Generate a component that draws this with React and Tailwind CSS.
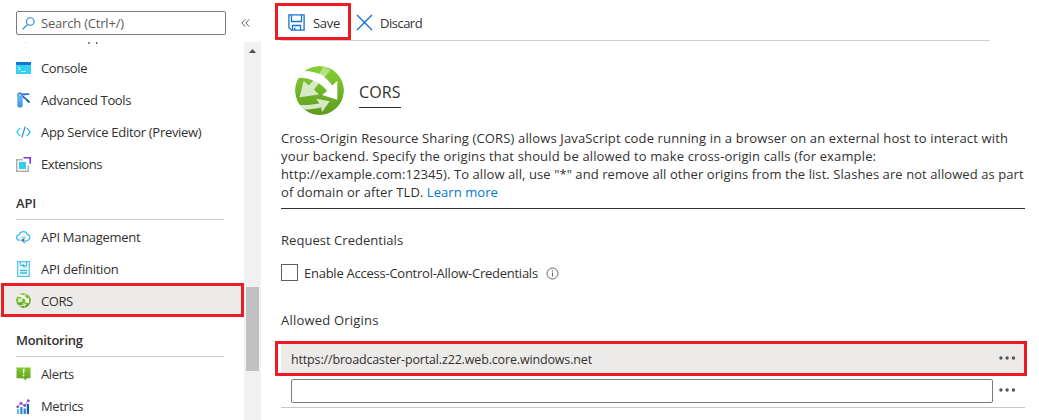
const ConsoleIcon = () => (
  <svg width="15" height="12" viewBox="0 0 15 12" className="block">
    <rect width="15" height="12" rx=".5" fill="#32d0f3" />
    <path d="M0 0h15v3H0z" fill="#0f78d3" />
    <path d="M2 4.8l2.2 1.9L2 8.6" fill="none" stroke="#e6fbff" strokeWidth="1" />
    <path d="M5 9.5h4.5" stroke="#e6fbff" />
  </svg>
);
const ToolsIcon = () => (
  <svg width="15" height="16" viewBox="0 0 15 16" className="block">
    <defs>
      <linearGradient id="tool" x1="0" x2="0" y1="0" y2="1">
        <stop offset="0" stopColor="#2f7fd0" /><stop offset=".35" stopColor="#6db4f2" /><stop offset="1" stopColor="#3a8ee6" />
      </linearGradient>
    </defs>
    <path d="M6 1.600l7.300-.3v1.500L6 3.400z" fill="#1b72c9" />
    <path d="M6.500 3l7.500 6.500-.8 1.800-3-2.400-.2-1L6.500 5.600z" fill="#1267c2" />
    <rect x="1.300" y=".500" width="5.400" height="15" rx="2" fill="url(#tool)" />
    <circle cx="3.800" cy="3" r=".9" fill="#cfe7ff" />
  </svg>
);
const CodeIcon = () => (
  <svg width="15" height="12" viewBox="0 0 15 12" className="block" fill="none" strokeWidth="1.3">
    <path d="M4.200 1.800L.9 6l3.300 4.200" stroke="#40cbee" />
    <path d="M10.800 1.800L14.100 6l-3.300 4.200" stroke="#40b4ee" />
    <path d="M9.200.6L5.900 11.400" stroke="#3b8be0" />
  </svg>
);
const ExtensionsIcon = () => (
  <svg width="15" height="15" viewBox="0 0 15 15" className="block">
    <path d="M7 2.700H.8v11.500h11.500V8.500" fill="none" stroke="#aeaeae" strokeWidth="1.500" />
    <rect x="3" y="5" width="7" height="7" fill="#35cdeb" />
    <path d="M7.500.8h6.700v6" fill="none" stroke="#7636d9" strokeWidth="1.600" />
  </svg>
);
const CloudIcon = () => (
  <svg width="15" height="14" viewBox="0 0 15 14" className="block" fill="none">
    <path d="M4.300 10.200H3.400A2.700 2.700 0 0 1 3.100 4.800 4.300 4.300 0 0 1 11.300 4.600a2.900 2.900 0 0 1 .2 5.700L7.500 13" stroke="#3dbde9" strokeWidth="1.300" />
    <path d="M4.500 8.200c1-1.300 3-1.600 4.200-.5M9 6v2.400H6.600" stroke="#64cbea" />
    <circle cx="7" cy="10.200" r="1.500" fill="#7359bb" />
  </svg>
);
const DefinitionIcon = () => (
  <svg width="13" height="16" viewBox="0 0 13 16" className="ml-px block" fill="none">
    <path d="M.7.700h11.600v14.600H.7z" fill="#effcff" stroke="#45cde8" strokeWidth="1.200" />
    <path d="M3.300 1v3.400h5M9.500 1v3.800M6.300 3v2.800h3.200" stroke="#27b8dc" />
    <path d="M3 9.500h7M3 12h7" stroke="#38bddb" strokeWidth="1.300" />
  </svg>
);
const CorsIcon = ({ size, id }) => (
  <svg width={size} height={size} viewBox="0 0 48 48" className="block">
    <defs>
      <linearGradient id={id} x1="0" x2="0" y1="0" y2="1">
        <stop offset="0" stopColor="#84d132" /><stop offset="1" stopColor="#5f9a20" />
      </linearGradient>
      <clipPath id={id + "-clip"}><circle cx="24" cy="24" r="24" /></clipPath>
    </defs>
    <g clipPath={`url(#${id}-clip)`}>
      <circle cx="24" cy="24" r="24" fill={`url(#${id})`} />
      <path d="M29 1.500l4.500 3.500L18.500 23l5 5L4.500 30.500 8.500 14.500l5 4.500z" fill="#d7eac6" />
      <path d="M28.500 0l6 4-4.500 6-6-3z" fill="#b5e184" />
      <path d="M2 38c8 .7 16 0 22-1.500l-3.500-4.500 13.500 2.500-7.500 10.500-1-4.500C18 42.500 11 43 5 42z" fill="#d7eac6" />
      <path d="M2 11.500L8 5c12-.5 21.500 4 28.500 14L41.500 14.500V33L26.500 28.500l5-4C25 15.500 14 11 2 11.500z" fill="#fff" />
    </g>
  </svg>
);
const AlertsIcon = () => (
  <svg width="15" height="14" viewBox="0 0 15 14" className="block">
    <defs>
      <linearGradient id="alert" x1="0" x2="0" y1="0" y2="1">
        <stop offset="0" stopColor="#80ca2b" /><stop offset="1" stopColor="#609e20" />
      </linearGradient>
    </defs>
    <path d="M.5.500h14v10.700h-4L10 13.500 7.500 11.200H.5z" fill="url(#alert)" />
    <path d="M6.800 1.800h1.700l-.3 5H7z" fill="#fff" />
    <circle cx="7.600" cy="8.600" r=".9" fill="#fff" />
  </svg>
);
const MetricsIcon = () => (
  <svg width="14" height="15" viewBox="0 0 14 15" className="block">
    <path d="M1 10h2.200v5H1z" fill="#6cb9f2" />
    <path d="M4.300 8h2.200v7H4.300z" fill="#2387d8" />
    <path d="M7.600 9.500h2.200V15H7.600z" fill="#2380ca" />
    <path d="M10.800 5H13v10h-2.200z" fill="#115ea3" />
    <path d="M1.700 7.800l3-3.500 4 2.300 3.600-5" fill="none" stroke="#a67af4" strokeWidth="1" />
    <g fill="#8d50e6"><circle cx="1.700" cy="7.800" r="1.400" /><circle cx="5" cy="4.200" r="1.500" /><circle cx="8.700" cy="6.600" r="1.500" /><circle cx="12.300" cy="1.700" r="1.500" /></g>
  </svg>
);

const NavItem = ({ icon, label, spacing }) => (
  <div className="flex h-8 items-center pl-4">
    <div className="flex w-[25px] shrink-0">{icon}</div>
    <span className={"whitespace-nowrap " + spacing}>{label}</span>
  </div>
);
const NavHeading = ({ label, spacing }) => (
  <div className="ml-4 w-52 border-b border-[#c8c8c8]">
    <div className={"flex h-8 items-center font-semibold " + spacing}>{label}</div>
  </div>
);
const Dots = () => (
  <svg width="16" height="4" viewBox="0 0 16 4" className="block shrink-0" fill="#555">
    <circle cx="1.900" cy="2" r="1.700" /><circle cx="8.100" cy="2" r="1.700" /><circle cx="14.400" cy="2" r="1.700" />
  </svg>
);

function Sidebar() {
  return (
    <aside className="flex h-[420px] w-[261px] shrink-0 flex-col">
      <div className="flex h-[42px] shrink-0 items-start pt-[11px] pl-4">
        <div className="flex h-6 w-[210px] items-center rounded-[2px] border border-[#7c7a78] pl-[5px]">
          <svg width="13" height="13" viewBox="0 0 13 13" fill="none" stroke="#1981d8" strokeWidth="1.100" className="shrink-0">
            <circle cx="8.300" cy="4.500" r="3.800" /><path d="M5.600 7.300L.6 12.300" />
          </svg>
          <span className="ml-1.5 whitespace-nowrap tracking-[-0.2px] text-[#5c5a58]">Search (Ctrl+/)</span>
        </div>
        <svg width="9" height="8" viewBox="0 0 9 8" fill="none" stroke="#555" className="mt-2 ml-[15px]">
          <path d="M4.200.5L.8 4l3.400 3.500M8.200.5L4.800 4l3.400 3.500" />
        </svg>
      </div>
      <div className="flex h-[378px]">
        <div className="flex h-[378px] w-[244px] flex-col overflow-hidden">
          <nav className="-mt-[22px] flex flex-col">
            <NavItem icon={<svg width="15" height="15" viewBox="0 0 15 15"><path d="M8 11l3-1v3.500H8z" fill="#e9e5bd" /></svg>} label="Clone App" spacing="tracking-[0px]" />
            <NavItem icon={<ConsoleIcon />} label="Console" spacing="tracking-[-0.35px]" />
            <NavItem icon={<ToolsIcon />} label="Advanced Tools" spacing="tracking-[-0.35px]" />
            <NavItem icon={<CodeIcon />} label="App Service Editor (Preview)" spacing="tracking-[-0.3px]" />
            <NavItem icon={<ExtensionsIcon />} label="Extensions" spacing="tracking-[-0.45px]" />
            <div className="h-[7px]" />
            <NavHeading label="API" spacing="tracking-[-0.2px]" />
            <div className="h-px" />
            <NavItem icon={<CloudIcon />} label="API Management" spacing="tracking-[-0.3px]" />
            <NavItem icon={<DefinitionIcon />} label="API definition" spacing="tracking-[-0.25px]" />
            <div className="-mt-[2px] ml-px flex h-[34px] items-center border-[3px] border-[#ed1c24] bg-[#edebe9] pl-3">
              <div className="w-[25px]"><CorsIcon size={15} id="nav-cors" /></div>
              <span className="pt-[2px] tracking-[-0.45px]">CORS</span>
            </div>
            <div className="h-[7px]" />
            <NavHeading label="Monitoring" spacing="tracking-[-0.3px]" />
            <div className="h-px" />
            <NavItem icon={<AlertsIcon />} label="Alerts" spacing="tracking-[-0.35px]" />
            <NavItem icon={<MetricsIcon />} label="Metrics" spacing="tracking-[-0.35px]" />
          </nav>
        </div>
        <div className="flex w-[17px] flex-col bg-[#f1f1f1] px-[2px]">
          <svg width="13" height="17" viewBox="0 0 13 17" className="block"><path d="M3 11h7L6.500 7z" fill="#505050" /></svg>
          <div className="mt-[228px] h-[84px] bg-[#c1c1c1]" />
        </div>
      </div>
    </aside>
  );
}

function Main() {
  return (
    <main className="flex w-[778px] flex-col">
      <div className="flex h-[41px] shrink-0 items-start pt-[3px] pl-[14px]">
        <button className="relative z-10 flex h-[37px] w-[76px] items-center border-[3px] border-[#ed1c24] pt-[2px] pl-[10px]">
          <svg width="17" height="17" viewBox="0 0 17 17" fill="none" stroke="#1374ce" strokeWidth="1.300" className="-mt-px shrink-0">
            <path d="M.9.900h15.200v15.200H3.500L.9 13.500z" /><path d="M3.500 1v6.500h10V1M4.500 16v-4.500h8V16M6.800 16v-2.500" />
          </svg>
          <span className="ml-2 tracking-[-0.3px]">Save</span>
        </button>
        <button className="flex h-[37px] items-center pt-[2px] pl-[5px]">
          <svg width="17" height="17" viewBox="0 0 17 17" fill="none" stroke="#1374ce" strokeWidth="1.400"><path d="M1 1l15 15M16 1L1 16" /></svg>
          <span className="ml-[7px] tracking-[-0.5px]">Discard</span>
        </button>
      </div>
      <div className="-mt-px ml-5 h-px w-[709px] bg-[#d2d0ce]" />
      <div className="ml-[34px] mt-[25px] flex h-12 w-[200px]">
        <div className="size-12 shrink-0"><CorsIcon size={49} id="main-cors" /></div>
        <div className="mt-[13px] ml-4 flex h-[29px] items-center border-b border-[#323130] pb-[2px] text-[16px] tracking-[0.1px]">CORS</div>
      </div>
      <p className="mt-[15px] ml-5 h-20 w-[744px] border-b border-[#323130] text-[13px] leading-[18px] whitespace-nowrap">
        <span className="tracking-[0.145px]">Cross-Origin Resource Sharing (CORS) allows JavaScript code running in a browser on an external host to interact with</span><br />
        <span className="tracking-[0.15px]">your backend. Specify the origins that should be allowed to make cross-origin calls (for example:</span><br />
        <span className="tracking-[0.08px]">http://example.com:12345). To allow all, use "*" and remove all other origins from the list. Slashes are not allowed as part</span><br />
        <span className="tracking-[0.07px]">of domain or after TLD. <a className="text-[#0078d4]">Learn more</a></span>
      </p>
      <div className="mt-[22px] ml-5 flex h-[18px] items-center"><span className="tracking-[0.04px]">Request Credentials</span></div>
      <div className="mt-[14px] ml-5 flex h-[18px] items-center">
        <div className="size-[17px] border border-[#605e5c]" />
        <label className="ml-1.5 pt-[2px]"><span className="tracking-[-0.25px]">Enable Access-Control-Allow-Credentials</span></label>
        <svg width="13" height="13" viewBox="0 0 13 13" fill="none" stroke="#666" className="mt-[3px] ml-2"><circle cx="6.500" cy="6.500" r="5.500" /><path d="M6.500 5.500V9.500M6.500 3.200v1.300" /></svg>
      </div>
      <div className="mt-[30px] ml-5 flex h-[18px] items-center"><span className="tracking-[0.2px]">Allowed Origins</span></div>
      <div className="mt-3 ml-[14px] flex h-[35px] w-[752px] border-[3px] border-[#ed1c24] pl-[3px]">
        <div className="flex w-full items-center justify-between bg-[#edebe9] pt-[2px] pr-[9px] pl-[10px]">
          <span className="text-[12.5px] tracking-[-0.155px]">https://broadcaster-portal.z22.web.core.windows.net</span>
          <div className="pb-[4px]"><Dots /></div>
        </div>
      </div>
      <div className="ml-5 flex h-8 w-[744px] items-start border-b border-[#c8c6c4] pt-[3px] pl-[10px]">
        <input aria-label="Origin" className="h-6 w-[702px] rounded-[2px] border border-[#7c7a78] bg-white" />
        <div className="mt-[9px] ml-1.5"><Dots /></div>
      </div>
    </main>
  );
}

export default function App() {
  return (
    <div className="flex h-[420px] w-[1039px] overflow-hidden bg-white font-['Open_Sans','Noto_Sans',sans-serif] text-[13px] leading-[18px] text-[#323130]">
      <Sidebar />
      <Main />
    </div>
  );
}
